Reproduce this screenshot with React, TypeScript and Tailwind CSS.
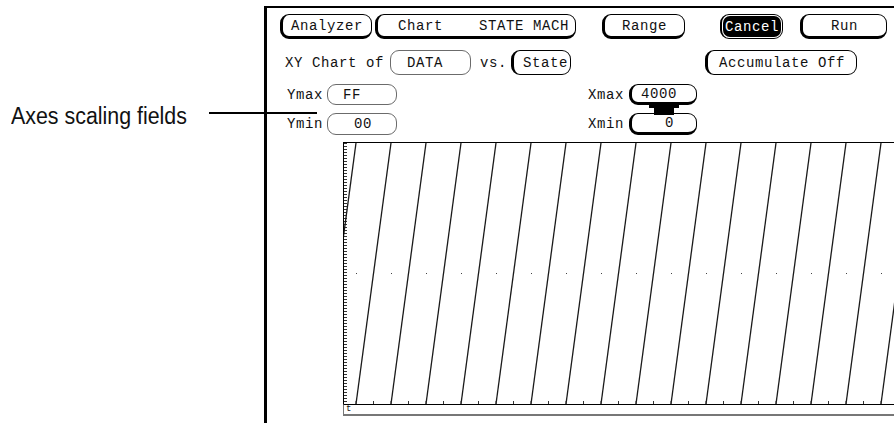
import React from "react";
import clsx from "clsx";

type Kind = "btn" | "edge" | "field";

const kinds: Record<Kind, string> = {
  btn: "border border-black border-l-[3px] border-b-[3px]",
  edge: "border border-black border-l-[3px]",
  field: "border border-[#6b6b6b]",
};

const mono = "font-['Liberation_Mono',monospace] text-[14px] tracking-[0.6px] text-[#111] leading-none";

const Key: React.FC<{ kind?: Kind; className?: string; children?: React.ReactNode }> = ({
  kind = "btn",
  className,
  children,
}) => (
  <div className={clsx("flex shrink-0 items-center rounded-[9px] bg-white", kinds[kind], className)}>
    {children}
  </div>
);

// plot area geometry
const W = 550;
const H = 261;
const STEP = 35;
const X0 = 12;
const teeth = Array.from({ length: 18 }, (_, i) => X0 + STEP * (i - 1));
const ticks = Array.from({ length: 34 }, (_, i) => X0 + (STEP / 2) * i);

const Plot = () => (
  <svg width={W} height={H} className="block">
    <line x1={1.5} y1={0} x2={1.5} y2={H} stroke="#333" strokeWidth={3} strokeDasharray="1 2" />
    {teeth.map((x) => (
      <line key={x} x1={x} y1={H} x2={x + STEP} y2={0} stroke="#1a1a1a" strokeWidth={1.3} />
    ))}
    {teeth.map((x) => (
      <rect key={"d" + x} x={x} y={130} width={1} height={1} fill="#444" />
    ))}
    {ticks.map((x) => (
      <line key={"t" + x} x1={x} y1={H - 3} x2={x} y2={H} stroke="#333" strokeWidth={1} />
    ))}
  </svg>
);

export default function App() {
  return (
    <div className="relative flex h-[423px] w-[894px] overflow-hidden bg-white">
      {/* annotation */}
      <div className="w-[264px] shrink-0 pl-[11px] pt-[99px]">
        <span className="inline-block origin-left scale-x-[0.93] whitespace-nowrap font-['Liberation_Sans',sans-serif] text-[23px] text-[#111]">
          Axes scaling fields
        </span>
      </div>
      <div className="absolute left-[209px] top-[112px] h-[2px] w-[108px] bg-black" />

      {/* analyzer screen */}
      <div className={clsx("mt-[6px] flex-1 border-l-[3px] border-t-2 border-black", mono)}>
        {/* row 1 */}
        <div className="ml-[13px] mt-[6px] flex h-[25px]">
          <Key className="w-[92px] pl-[8px]">Analyzer</Key>
          <Key className="ml-[3px] w-[201px] whitespace-pre pl-[20px]">Chart    STATE MACH</Key>
          <Key className="ml-[26px] w-[83px] justify-center">Range</Key>
          <div className="ml-[35px] w-[63px] shrink-0 rounded-[9px] border border-l-2 border-black p-[1px]">
            <div className="flex h-full items-center justify-center rounded-[7px] bg-black text-white">Cancel</div>
          </div>
          <Key className="ml-[17px] w-[87px] justify-center">Run</Key>
        </div>

        {/* row 2 */}
        <div className="mt-[11px] flex h-[25px] items-center">
          <span className="ml-[18px] w-[105px] shrink-0">XY Chart of</span>
          <Key kind="field" className="h-full w-[81px] pl-[16px]">DATA</Key>
          <span className="ml-[9px] w-[31px] shrink-0">vs.</span>
          <Key kind="edge" className="h-full w-[60px] pl-[9px]">State</Key>
          <Key kind="edge" className="ml-[134px] h-full w-[152px] justify-center">Accumulate Off</Key>
        </div>

        {/* row 3 */}
        <div className="mt-[9px] flex h-[21px] items-center">
          <span className="ml-[20px] w-[40px] shrink-0">Ymax</span>
          <Key kind="field" className="h-full w-[70px] pl-[15px]">FF</Key>
          <span className="ml-[191px] w-[41px] shrink-0">Xmax</span>
          <Key className="relative h-full w-[68px] pl-[9px]">
            4000
            <svg width={30} height={11} className="absolute left-[17px] top-[19px]">
              <polygon points="0,0 30,0 30,4 25,4 25,11 5,11 5,4 0,4" fill="#000" />
            </svg>
          </Key>
        </div>

        {/* row 4 */}
        <div className="mt-[8px] flex h-[22px] items-center">
          <span className="ml-[20px] w-[40px] shrink-0">Ymin</span>
          <Key kind="field" className="h-full w-[70px] pl-[26px]">00</Key>
          <span className="ml-[191px] w-[41px] shrink-0">Xmin</span>
          <Key className="h-full w-[68px] justify-end pr-[22px]">0</Key>
        </div>

        {/* chart */}
        <div className="ml-[76px] mt-[7px] flex flex-col">
          <div className="border-l border-t border-black">
            <Plot />
          </div>
          <div className="flex h-[12px] items-start border-b-2 border-l border-t border-b-[#777] border-l-[#777] border-t-black pl-[2px]">
            <span className="text-[9px] leading-[9px]">t</span>
          </div>
        </div>
      </div>
    </div>
  );
}
